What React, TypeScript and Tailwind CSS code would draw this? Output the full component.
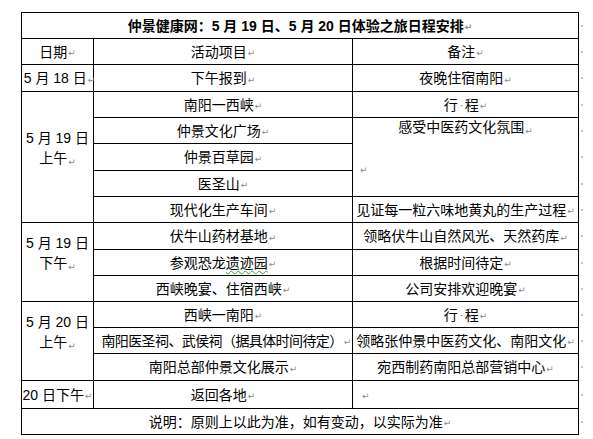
import React from "react";

// Word-style paragraph mark
function Mark() {
  return (
    <span className="font-['DejaVu_Sans',sans-serif] text-[9px] leading-none text-[#8c8c8c] ml-px translate-y-[2px] inline-block">
      ↵
    </span>
  );
}

// Word-style space mark
function Space() {
  return <span className="inline-block w-[7px] text-center text-[11px] text-[#6e6e6e]">·</span>;
}

function Cell({ className = "", children }: { className?: string; children?: React.ReactNode }) {
  return (
    <div className={`bg-white flex items-center justify-center whitespace-nowrap ${className}`}>
      {children}
    </div>
  );
}

function DayCell({ a, b, className }: { a: string; b: string; className: string }) {
  return (
    <div className={`bg-white flex flex-col items-center justify-center pb-[19px] leading-[20px] whitespace-nowrap ${className}`}>
      <div>{a}</div>
      <div>
        {b}
        <Mark />
      </div>
    </div>
  );
}

const rows = "grid-rows-[25px_25px_26px_25px_25px_26px_25px_25px_26px_25px_25px_25px_25px_26px_27px_25px]";

export default function App() {
  return (
    <div className="w-[593px] h-[439px] bg-white pt-[12px] pl-[21px] font-['Liberation_Sans','Noto_Sans_CJK_SC',sans-serif] text-[14px] leading-[16px] text-black flex overflow-hidden">
      <div className={`grid grid-cols-[71px_258px_225px] ${rows} gap-px p-px bg-black w-[558px] h-[423px]`}>
        {/* title */}
        <Cell className="col-span-3 font-bold">
          仲景健康网：5 月 19 日、5 月 20 日体验之旅日程安排
          <Mark />
        </Cell>

        {/* header */}
        <Cell>日期<Mark /></Cell>
        <Cell>活动项目<Mark /></Cell>
        <Cell>备注<Mark /></Cell>

        {/* 5/18 */}
        <Cell className="pl-[4px]">5 月 18 日<Mark /></Cell>
        <Cell>下午报到<Mark /></Cell>
        <Cell>夜晚住宿南阳<Mark /></Cell>

        {/* 5/19 am */}
        <DayCell a="5 月 19 日" b="上午" className="col-start-1 row-start-4 row-span-5" />
        <Cell className="col-start-2 row-start-4">南阳一西峡<Mark /></Cell>
        <Cell className="col-start-3 row-start-4">行<Space />程<Mark /></Cell>
        <Cell className="col-start-2 row-start-5">仲景文化广场<Mark /></Cell>
        <div className="bg-white col-start-3 row-start-5 row-span-3 flex flex-col whitespace-nowrap">
          <div className="mt-[2px] leading-[14px] text-center">
            感受中医药文化氛围<Mark />
          </div>
          <div className="mt-[25px] pl-[6px] leading-[14px]">
            <Mark />
          </div>
        </div>
        <Cell className="col-start-2 row-start-6">仲景百草园<Mark /></Cell>
        <Cell className="col-start-2 row-start-7">医圣山<Mark /></Cell>
        <Cell className="col-start-2 row-start-8">现代化生产车间<Mark /></Cell>
        <Cell className="col-start-3 row-start-8">见证每一粒六味地黄丸的生产过程<Mark /></Cell>

        {/* 5/19 pm */}
        <DayCell a="5 月 19 日" b="下午" className="col-start-1 row-start-9 row-span-3" />
        <Cell className="col-start-2 row-start-9">伏牛山药材基地<Mark /></Cell>
        <Cell className="col-start-3 row-start-9">领略伏牛山自然风光、天然药库<Mark /></Cell>
        <Cell className="col-start-2 row-start-10">
          参观恐龙
          <span className="underline decoration-wavy decoration-[#3ca03c] decoration-1 underline-offset-2">遗迹园</span>
          <Mark />
        </Cell>
        <Cell className="col-start-3 row-start-10">根据时间待定<Mark /></Cell>
        <Cell className="col-start-2 row-start-11">西峡晚宴、住宿西峡<Mark /></Cell>
        <Cell className="col-start-3 row-start-11">公司安排欢迎晚宴<Mark /></Cell>

        {/* 5/20 am */}
        <DayCell a="5 月 20 日" b="上午" className="col-start-1 row-start-12 row-span-3" />
        <Cell className="col-start-2 row-start-12">西峡一南阳<Mark /></Cell>
        <Cell className="col-start-3 row-start-12">行<Space />程<Mark /></Cell>
        <Cell className="col-start-2 row-start-13 tracking-[-0.6px] pl-[6px]">南阳医圣祠、武侯祠（据具体时间待定）<Mark /></Cell>
        <Cell className="col-start-3 row-start-13">领略张仲景中医药文化、南阳文化<Mark /></Cell>
        <Cell className="col-start-2 row-start-14">南阳总部仲景文化展示<Mark /></Cell>
        <Cell className="col-start-3 row-start-14">宛西制药南阳总部营销中心<Mark /></Cell>

        {/* 5/20 pm */}
        <Cell className="col-start-1 row-start-15">20 日下午<Mark /></Cell>
        <Cell className="col-start-2 row-start-15">返回各地<Mark /></Cell>
        <Cell className="col-start-3 row-start-15 justify-start pl-[8px]"><Mark /></Cell>

        {/* note */}
        <Cell className="col-span-3 row-start-16">
          说明：原则上以此为准，如有变动，以实际为准
          <Mark />
        </Cell>
      </div>

      {/* end-of-row marks */}
      <div className={`grid ${rows} gap-px py-px w-[8px] h-[423px]`}>
        {Array.from({ length: 16 }).map((_, i) => (
          <div key={i} className="flex items-center pl-[2px]">
            <div className="w-[2px] h-[2px] bg-[#c8c8c8]" />
          </div>
        ))}
      </div>
    </div>
  );
}
